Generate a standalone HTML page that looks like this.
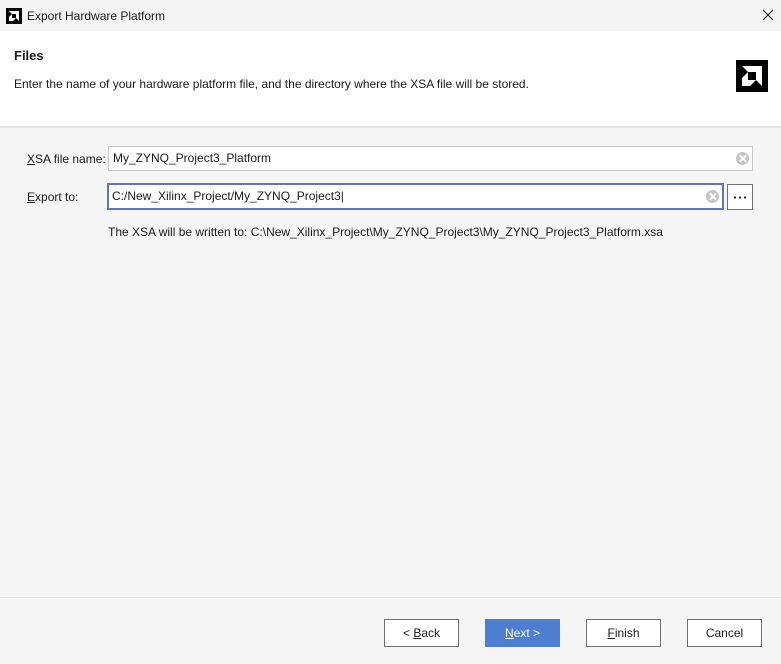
<!DOCTYPE html>
<html><head><style>
body{margin:0;width:781px;height:664px;position:relative;background:#f5f5f5;font-family:"Liberation Sans",Arial,sans-serif;font-size:12px;color:#1a1a1a;overflow:hidden}
.a{position:absolute}
.in{position:absolute;background:#fff;border:1px solid #c8c8c8;box-sizing:border-box;padding-left:4px;line-height:23px}
.clr{position:absolute;width:13px;height:13px;border-radius:50%;background:#c4c4c4;top:5px}
.clr:before,.clr:after{content:"";position:absolute;left:6px;top:2px;width:1.6px;height:9px;background:#fff;transform:rotate(45deg)}
.clr:after{transform:rotate(-45deg)}
.btn{position:absolute;top:619px;width:75px;height:28px;box-sizing:border-box;border:1px solid #707070;background:#fff;text-align:center;line-height:26px}
</style></head><body>
<div class="a" style="left:0;top:0;width:781px;height:31px;background:#f3f3f3"></div>
<svg class="a" style="left:6px;top:8px" width="16" height="16" viewBox="0 0 32 32"><rect width="32" height="32" fill="#000"/><path d="M6 6h20v20l-6-6V12h-8z" fill="#fff"/><path d="M6 18l6-6v8h8l-6 6H6z" fill="#fff"/></svg>
<div class="a" style="left:27px;top:9px;font-size:12px">Export Hardware Platform</div>
<svg class="a" style="left:762px;top:9px" width="12" height="12" viewBox="0 0 12 12"><path d="M1 1L11 11M11 1L1 11" stroke="#222" stroke-width="1.1"/></svg>
<div class="a" style="left:0;top:31px;width:781px;height:95px;background:#fff"></div>
<div class="a" style="left:0;top:126px;width:781px;height:2px;background:#e4e4e4"></div>
<div class="a" style="left:14px;top:48px;font-weight:bold;font-size:13px">Files</div>
<div class="a" style="left:14px;top:77px">Enter the name of your hardware platform file, and the directory where the XSA file will be stored.</div>
<svg class="a" style="left:736px;top:60px" width="32" height="32" viewBox="0 0 32 32"><rect width="32" height="32" fill="#000"/><path d="M6 6h20v20l-6-6V12h-8z" fill="#fff"/><path d="M6 18l6-6v8h8l-6 6H6z" fill="#fff"/></svg>
<div class="a" style="left:27px;top:152px"><u>X</u>SA file name:</div>
<div class="in" style="left:108px;top:146px;width:645px;height:25px">My_ZYNQ_Project3_Platform<div class="clr" style="left:627px"></div></div>
<div class="a" style="left:27px;top:190px"><u>E</u>xport to:</div>
<div class="in" style="left:107px;top:183px;width:617px;height:27px;border:2px solid #5a76c4;padding-left:3px;line-height:23px">C:/New_Xilinx_Project/My_ZYNQ_Project3|<div class="clr" style="left:597px"></div></div>
<div class="a" style="left:727px;top:184px;width:26px;height:26px;box-sizing:border-box;border:1px solid #707070;background:#fff"><svg class="a" style="left:5px;top:11px" width="14" height="3"><circle cx="2" cy="1.5" r="1.1" fill="#222"/><circle cx="7" cy="1.5" r="1.1" fill="#222"/><circle cx="12" cy="1.5" r="1.1" fill="#222"/></svg></div>
<div class="a" style="left:108px;top:225px">The XSA will be written to: C:\New_Xilinx_Project\My_ZYNQ_Project3\My_ZYNQ_Project3_Platform.xsa</div>
<div class="a" style="left:0;top:597px;width:781px;height:1px;background:#e2e2e2"></div>
<div class="btn" style="left:384px">&lt; <u>B</u>ack</div>
<div class="btn" style="left:485px;background:#4d7ed2;border-color:#4d7ed2;color:#fff"><u>N</u>ext &gt;</div>
<div class="btn" style="left:586px"><u>F</u>inish</div>
<div class="btn" style="left:687px">Cancel</div>
</body></html>
